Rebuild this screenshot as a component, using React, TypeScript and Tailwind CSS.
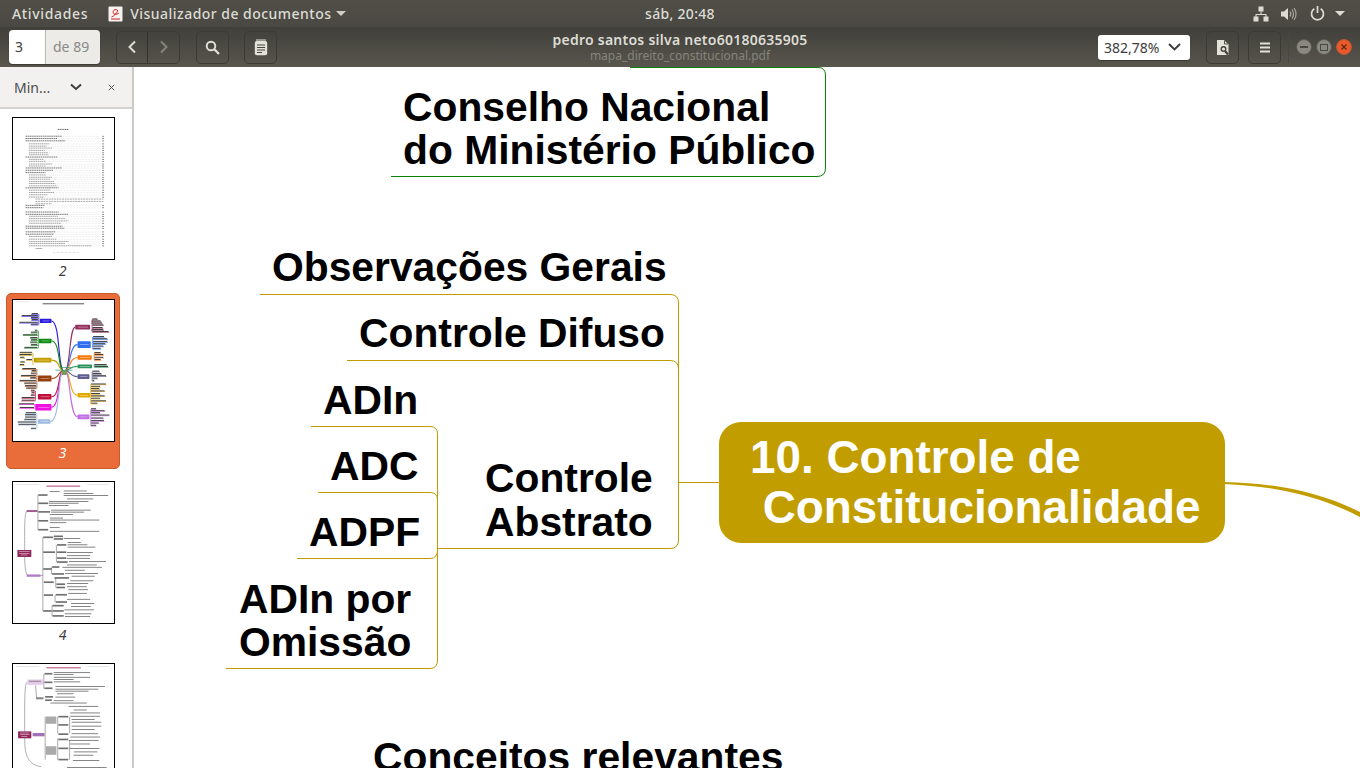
import React from "react";

const Bars = ({ items, color, h = 1.6 }: { items: number[][]; color: string; h?: number }) => (
  <g fill={color}>
    {items.map((b, i) => (
      <rect key={i} x={b[0]} y={b[1]} width={b[2]} height={h} />
    ))}
  </g>
);

function TocThumb() {
  const rows: number[][] = [
    [75, 76, 0], [75, 83, 0], [75, 90, 0], [85, 99, 1], [85, 106, 1], [85, 112, 1], [85, 119, 1], [85, 126, 1], [85, 132, 1],
    [75, 139, 0], [85, 146, 1], [85, 152, 1], [85, 160, 1], [85, 166, 1], [75, 172, 0], [75, 179, 0], [75, 186, 0], [85, 193, 1], [85, 200, 1], [85, 206, 1],
    [85, 213, 1], [85, 219, 1], [85, 226, 1], [75, 232, 0], [85, 239, 1], [85, 246, 1], [85, 253, 1], [85, 260, 1],
    [75, 285, 0], [75, 292, 0], [75, 305, 0], [75, 312, 0], [85, 318, 1], [85, 325, 1], [85, 332, 1], [85, 339, 1], [75, 348, 0], [75, 354, 0], [75, 365, 0], [75, 372, 0], [85, 379, 1], [85, 387, 1], [85, 394, 1], [85, 400, 1], [85, 407, 1],
  ];
  const widths = [110, 95, 120, 62, 54, 70, 48, 58, 60, 96, 44, 52, 72, 50, 110, 84, 60, 52, 70, 64, 76, 80, 86, 100, 66, 78, 56, 46, 58, 54, 100, 130, 88, 110, 120, 96, 112, 118, 90, 86, 70, 84, 120, 110, 190];
  return (
    <svg viewBox="37 22 305 426" className="block w-full h-full">
      <rect x="37" y="22" width="305" height="426" fill="#fff" />
      <line x1="172" y1="56.500" x2="206" y2="56.500" stroke="#666" strokeWidth="3" strokeDasharray="4 1.500" />
      {rows.map((r, i) => (
        <g key={i}>
          <line x1={r[0]} y1={r[1] + 1} x2={r[0] + widths[i]} y2={r[1] + 1} stroke={r[2] ? "#8a8a8a" : "#555"} strokeWidth="2.400" strokeDasharray="5 1.500" />
          <line x1={r[0] + widths[i] + 4} y1={r[1] + 1.500} x2="302" y2={r[1] + 1.500} stroke="#b8b8b8" strokeWidth="1.400" strokeDasharray="1.500 3" />
          <rect x="306" y={r[1]} width="6" height="2.400" fill="#777" />
        </g>
      ))}
      {[267, 274].map((y) => (
        <line key={y} x1="105" y1={y} x2="310" y2={y} stroke="#8a8a8a" strokeWidth="2.200" strokeDasharray="6 2" />
      ))}
      <line x1="105" y1="281" x2="155" y2="281" stroke="#8a8a8a" strokeWidth="2.200" strokeDasharray="6 2" />
      <rect x="105" y="415" width="20" height="2" fill="#888" />
      <line x1="158" y1="428" x2="238" y2="428" stroke="#aaa" strokeWidth="1.500" strokeDasharray="2 2" />
    </svg>
  );
}

function MindThumb() {
  const left = [
    ["#2a1ae0", 118, 100, 35, 13],
    ["#0d8a12", 115, 160, 38, 14],
    ["#c49d00", 100, 218, 53, 14],
    ["#98400c", 112, 272, 41, 18],
    ["#c00d3c", 112, 328, 41, 16],
    ["#f011e0", 104, 358, 49, 20],
    ["#9dbce0", 112, 404, 38, 14],
  ] as const;
  const right = [
    ["#93305f", 225, 118, 45, 14],
    ["#2f6ff0", 232, 168, 40, 20],
    ["#f57a0a", 232, 210, 43, 14],
    ["#2b9460", 232, 238, 44, 12],
    ["#605f93", 232, 268, 36, 14],
    ["#e2aa00", 232, 325, 38, 13],
    ["#c26be8", 232, 390, 36, 14],
  ] as const;
  const leftLeaves: Record<string, number[][]> = {
    "#2a1ae0": [[92, 86, 22], [62, 92, 52], [90, 98, 24], [92, 104, 22], [55, 112, 59], [90, 118, 24]],
    "#0d8a12": [[102, 136, 10], [90, 142, 22], [66, 150, 46], [88, 158, 24], [90, 165, 22], [88, 172, 24], [90, 180, 22], [70, 188, 42]],
    "#c49d00": [[56, 203, 40], [55, 210, 40], [57, 218, 16], [76, 225, 20], [58, 232, 16], [56, 240, 16]],
    "#98400c": [[64, 252, 44], [92, 258, 16], [90, 266, 18], [60, 273, 48], [88, 280, 20], [56, 288, 52], [70, 296, 38], [72, 304, 36], [76, 311, 32]],
    "#c00d3c": [[90, 318, 14], [92, 324, 12], [90, 332, 14], [62, 340, 42], [62, 348, 42]],
    "#f011e0": [[54, 359, 48], [56, 370, 46]],
    "#9dbce0": [[74, 386, 34], [72, 392, 36], [72, 399, 36], [70, 406, 38], [50, 414, 58], [52, 421, 56], [90, 433, 18]],
  };
  const rightLeaves: Record<string, number[][]> = {
    "#93305f": [[276, 102, 18], [274, 108, 30], [274, 114, 34], [276, 120, 36], [276, 128, 34], [274, 134, 38], [276, 140, 52]],
    "#2f6ff0": [[278, 155, 36], [278, 162, 46], [278, 170, 46], [278, 177, 40], [278, 184, 34], [278, 191, 26]],
    "#f57a0a": [[282, 204, 22], [282, 210, 30], [282, 218, 30], [282, 225, 22]],
    "#2b9460": [[282, 240, 40], [282, 246, 44]],
    "#605f93": [[276, 260, 24], [276, 267, 30], [276, 274, 44], [276, 281, 18], [276, 288, 8]],
    "#e2aa00": [[272, 299, 48], [272, 306, 30], [272, 313, 28], [272, 320, 44], [272, 328, 30], [272, 335, 44], [272, 342, 30], [272, 350, 48], [272, 357, 22]],
    "#c26be8": [[272, 374, 18], [272, 380, 44], [272, 386, 30], [272, 393, 58], [272, 402, 40], [272, 410, 42], [272, 417, 26], [272, 424, 18]],
  };
  return (
    <svg viewBox="37 43 305 427" className="block w-full h-full">
      <rect x="37" y="43" width="305" height="427" fill="#fff" />
      <rect x="126" y="53" width="126" height="3" fill="#555" />
      <rect x="45" y="48" width="40" height="1.500" fill="#ccc" />
      {left.map((n) => (
        <path key={n[0]} d={`M${n[1] + n[3]} ${n[2] + n[4] / 2} C180 ${n[2] + n[4] / 2} 172 255 190 258`} fill="none" stroke={n[0]} strokeWidth="3.400" />
      ))}
      {right.map((n) => (
        <path key={n[0]} d={`M${n[1]} ${n[2] + n[4] / 2} C207 ${n[2] + n[4] / 2} 210 255 194 258`} fill="none" stroke={n[0]} strokeWidth="3.400" />
      ))}
      {[...left, ...right].map((n) => (
        <rect key={n[0]} x={n[1]} y={n[2]} width={n[3]} height={n[4]} rx="2" fill={n[0]} />
      ))}
      {[...left, ...right].map((n) => (
        <rect key={n[0] + "t"} x={n[1] + 8} y={n[2] + n[4] / 2 - 1} width={n[3] - 14} height="2" fill="#fff" opacity="0.55" />
      ))}
      {Object.entries(leftLeaves).map(([c, it]) => (
        <g key={c}>
          <Bars items={it} color={c} h={1.800} />
          <Bars items={it.map((b) => [b[0] + 1, b[1] - 3, b[2] - 3])} color="#222" h={2.600} />
          <rect x={it[0][0] + it[0][2]} y={it[0][1]} width="2" height={it[it.length - 1][1] - it[0][1]} fill={c} />
        </g>
      ))}
      {Object.entries(rightLeaves).map(([c, it]) => (
        <g key={c}>
          <Bars items={it} color={c} h={1.800} />
          <Bars items={it.map((b) => [b[0] + 1, b[1] - 3, b[2] - 3])} color="#222" h={2.600} />
          <rect x={it[0][0] - 1} y={it[0][1]} width="2" height={it[it.length - 1][1] - it[0][1]} fill={c} />
        </g>
      ))}
      <rect x="180" y="246" width="35" height="3" fill="#2b9460" opacity=".7" />
      <rect x="165" y="254" width="52" height="3" fill="#2b9460" opacity=".7" />
      <rect x="185" y="256" width="14" height="14" fill="#6f9a5a" />
    </svg>
  );
}

function Tree4() {
  const grey = "#6f6f6f";
  const boxes = [
    [113, 55, 28, 6], [113, 80, 30, 6], [113, 106, 36, 6], [113, 133, 30, 6], [113, 160, 30, 6],
    [128, 183, 30, 6], [160, 180, 28, 6], [160, 188, 28, 6], [128, 228, 36, 6], [170, 206, 28, 6], [170, 228, 28, 6], [170, 246, 28, 6], [170, 258, 32, 6],
    [128, 279, 26, 6], [155, 273, 22, 6], [155, 294, 36, 6], [130, 319, 30, 6], [162, 306, 44, 6], [168, 325, 26, 6], [168, 335, 26, 6], [130, 358, 28, 10], [166, 357, 34, 6], [166, 379, 34, 6], [128, 406, 26, 6], [156, 390, 34, 6], [156, 406, 34, 6], [156, 421, 34, 6],
  ];
  const leaves = [
    [148, 46, 30], [190, 44, 70], [190, 52, 90], [190, 58, 135], [200, 68, 80], [145, 76, 120], [145, 81, 90], [145, 88, 60], [152, 102, 120], [152, 108, 100], [148, 115, 70], [148, 126, 40], [148, 132, 150], [148, 140, 50], [148, 155, 30], [148, 166, 150],
    [190, 188, 50], [202, 200, 40], [202, 207, 60], [202, 214, 84], [200, 230, 78], [200, 240, 70], [200, 248, 70], [206, 258, 112], [200, 268, 90], [186, 275, 120], [194, 284, 60], [194, 294, 100], [214, 302, 70], [210, 316, 70], [200, 324, 64], [200, 334, 60], [204, 343, 60], [204, 354, 56], [200, 372, 70], [212, 385, 70], [212, 394, 60], [192, 404, 90], [194, 416, 80], [194, 424, 76],
  ];
  return (
    <svg viewBox="37 18 305 427" className="block w-full h-full">
      <rect x="37" y="18" width="305" height="427" fill="#fff" />
      <rect x="138" y="29" width="102" height="3" fill="#b0407a" />
      <rect x="46" y="24" width="70" height="1.500" fill="#ccc" />
      <rect x="262" y="24" width="66" height="1.500" fill="#ccc" />
      <path d="M72 224 C72 170 70 106 80 106 M72 245 C72 280 76 301 82 301" fill="none" stroke="#999" strokeWidth="2.400" />
      <path d="M112 58 V163 M112 106 H80 M127 186 V409 M127 301 H120 M168 209 V261 M153 276 V297 M166 309 V338 M164 360 V382 M155 393 V424" fill="none" stroke={grey} strokeWidth="1.800" />
      <rect x="50" y="224" width="42" height="21" fill="#8e2659" />
      <rect x="55" y="228" width="32" height="2" fill="#e0b8cc" />
      <rect x="55" y="233" width="32" height="2" fill="#e0b8cc" />
      <rect x="60" y="238" width="20" height="2" fill="#e0b8cc" />
      <rect x="78" y="103" width="32" height="6" fill="#a25a8d" />
      <rect x="78" y="298" width="42" height="7" fill="#b478c8" />
      <Bars items={boxes} color={grey} h={5} />
      <Bars items={leaves} color="#666" h={2.400} />
    </svg>
  );
}

function Tree5() {
  const grey = "#6f6f6f";
  const boxes = [
    [132, 592, 24, 6], [132, 618, 24, 6], [132, 636, 24, 6], [134, 662, 24, 6], [134, 672, 20, 6], [174, 722, 30, 6], [174, 747, 30, 6], [174, 775, 30, 6], [174, 791, 30, 6], [174, 818, 30, 6], [174, 852, 30, 6],
  ];
  const leaves = [
    [160, 590, 110], [160, 596, 60], [160, 604, 110], [160, 611, 60], [160, 618, 80], [165, 632, 150], [165, 640, 130], [165, 646, 100], [170, 654, 50], [165, 664, 60], [160, 675, 60], [150, 682, 110],
    [205, 692, 90], [220, 703, 40], [210, 712, 90], [210, 722, 90], [214, 732, 70], [214, 740, 90], [214, 752, 90], [214, 762, 70], [214, 775, 80], [210, 785, 90], [206, 795, 90], [210, 806, 60], [208, 820, 90], [222, 830, 70], [220, 840, 60], [218, 856, 80], [200, 877, 120],
  ];
  return (
    <svg viewBox="37 565 305 427" className="block w-full h-full">
      <rect x="37" y="565" width="305" height="427" fill="#fff" />
      <rect x="138" y="575" width="104" height="3" fill="#b0407a" />
      <rect x="46" y="571" width="70" height="1.500" fill="#ccc" />
      <rect x="262" y="571" width="66" height="1.500" fill="#ccc" />
      <path d="M72 769 C72 700 70 620 80 620 M72 790 C72 830 76 870 122 876" fill="none" stroke="#999" strokeWidth="2.400" />
      <path d="M130 595 V640 M130 620 H128 M105 630 L108 668 H132 M134 725 V855 M172 725 V775 M172 790 V855 M208 725 V775 M208 795 V855" fill="none" stroke={grey} strokeWidth="1.800" />
      <rect x="52" y="769" width="40" height="21" fill="#8e2659" />
      <rect x="58" y="773" width="28" height="2" fill="#e0b8cc" />
      <rect x="58" y="778" width="28" height="2" fill="#e0b8cc" />
      <rect x="62" y="783" width="18" height="2" fill="#e0b8cc" />
      <rect x="80" y="612" width="47" height="16" fill="#e5c8ee" />
      <rect x="85" y="616" width="36" height="2" fill="#664" />
      <rect x="96" y="774" width="36" height="10" fill="#a070b8" />
      <rect x="106" y="666" width="22" height="6" fill="#888" />
      <rect x="136" y="724" width="32" height="22" fill="#aaa" />
      <rect x="136" y="814" width="32" height="26" fill="#aaa" />
      <Bars items={boxes} color={grey} h={5} />
      <Bars items={leaves} color="#666" h={2.400} />
    </svg>
  );
}

function Thumb({ n, active, children }: { n: string; active?: boolean; children: React.ReactNode }) {
  return (
    <div className={active ? "mx-[6px] w-[114px] h-[176px] shrink-0 rounded-[5px] bg-[#e96d3a] border border-[#c95a2c] pt-[5px] pl-[5px]" : "mx-[6px] w-[114px] h-[176px] shrink-0 border border-transparent pt-[5px] pl-[5px]"}>
      <div className="w-[103px] h-[143px] border border-black bg-white overflow-hidden">{children}</div>
      <div className={active ? "text-center italic text-[14px] leading-[20px] mt-px pr-[6px] text-white" : "text-center italic text-[14px] leading-[20px] mt-px pr-[6px] text-[#3c3c3c]"}>{n}</div>
    </div>
  );
}

const ToolBtn = ({ children }: { children: React.ReactNode }) => (
  <div className="w-[33px] h-[33px] rounded-[5px] border border-[#3b3a35] flex items-center justify-center">{children}</div>
);

const Label = ({ x, y, children }: { x: number; y: number; children: React.ReactNode }) => (
  <div className="absolute whitespace-pre font-bold leading-[43.5px] text-[40.8px] text-black" style={{ left: x, top: y }}>
    {children}
  </div>
);

export default function App() {
  const gold = "#bf9a00";
  return (
    <div className="w-[1360px] h-[768px] overflow-hidden flex flex-col bg-white font-['Noto_Sans','Open_Sans',sans-serif]">
      {/* Shell top bar */}
      <div className="h-[27px] shrink-0 grid grid-cols-[1fr_auto_1fr] items-center bg-gradient-to-b from-[#514f48] to-[#4a4842] text-[#dcdcd4] text-[14px] font-medium">
        <div className="flex items-center pl-[12px]">
          <span className="tracking-[0.65px]">Atividades</span>
          <svg width="15" height="16" viewBox="0 0 15 16" className="ml-[20px]">
            <rect x="0.5" y="0.5" width="14" height="15" rx="1" fill="#f4f3f1" />
            <path d="M3.500 11c2.500-1 5.500-4 6-6 .3-1.600-2-2.200-3.500-.8C4.500 5.500 5 8 7 8.300c1.500.2 3-.5 4-1.300M3 13h9" fill="none" stroke="#d6201f" strokeWidth="1" />
          </svg>
          <span className="ml-[7px] tracking-[0.47px]">Visualizador de documentos</span>
          <svg width="10" height="5" viewBox="0 0 10 5" className="ml-[5px]"><path d="M0 0h10L5 5z" fill="#cfcfc8" /></svg>
        </div>
        <div className="tracking-[0.3px]">sáb, 20:48</div>
        <div className="flex items-center justify-end pr-[15px]">
          <svg width="16" height="16" viewBox="0 0 16 16" fill="#dcdcd4">
            <rect x="5.500" y="0.500" width="5" height="5" />
            <rect x="0.500" y="10.500" width="5" height="5" />
            <rect x="10.500" y="10.500" width="5" height="5" />
            <path d="M7.500 5.500h1V8H13.500v3h-1V9h-9v2h-1V8h5z" />
          </svg>
          <svg width="16" height="16" viewBox="0 0 16 16" className="ml-[12px]">
            <path d="M0 5.500h3L7 2v12L3 10.500H0z" fill="#dcdcd4" />
            <path d="M9 5.500c1 1.500 1 3.500 0 5M11 3.500c2 2.500 2 6.500 0 9M13 2c2.700 3.500 2.700 8.500 0 12" fill="none" stroke="#a9a8a0" strokeWidth="1.200" />
          </svg>
          <svg width="15" height="15" viewBox="0 0 15 15" className="ml-[13px]">
            <path d="M4.300 2.800a6 6 0 1 0 6.400 0" fill="none" stroke="#dcdcd4" strokeWidth="1.700" />
            <path d="M7.500 0v7" stroke="#dcdcd4" strokeWidth="1.700" />
          </svg>
          <svg width="10" height="5" viewBox="0 0 10 5" className="ml-[10px]"><path d="M0 0h10L5 5z" fill="#dcdcd4" /></svg>
        </div>
      </div>

      {/* Title / tool bar */}
      <div className="h-[40px] shrink-0 grid grid-cols-[1fr_auto_1fr] items-center bg-gradient-to-b from-[#403f3a] to-[#58564d]">
        <div className="flex items-center pl-[9px]">
          <div className="flex h-[34px] w-[91px] rounded-[4px] overflow-hidden text-[14px] shadow-[0_1px_1px_#00000055]">
            <div className="w-[37px] bg-white border-r border-[#b8b6b0] text-[#3c3c3c] pl-[6px] leading-[33px]">3</div>
            <div className="flex-1 bg-[#ecebe8] text-[#8a8a86] pl-[7px] leading-[33px]">de 89</div>
          </div>
          <div className="ml-[16px] flex w-[64px] h-[33px] rounded-[5px] border border-[#3b3a35]">
            <div className="w-[31px] border-r border-[#33322e] flex items-center justify-center">
              <svg width="10" height="14" viewBox="0 0 10 14"><path d="M8 1.500L2.500 7 8 12.500" fill="none" stroke="#dcdcd4" strokeWidth="2" /></svg>
            </div>
            <div className="flex-1 flex items-center justify-center">
              <svg width="10" height="14" viewBox="0 0 10 14"><path d="M2 1.500L7.500 7 2 12.500" fill="none" stroke="#85847c" strokeWidth="2" /></svg>
            </div>
          </div>
          <div className="ml-[16px]">
            <ToolBtn>
              <svg width="15" height="15" viewBox="0 0 15 15"><circle cx="6" cy="6" r="4.300" fill="none" stroke="#e2e1da" strokeWidth="1.900" /><path d="M9.300 9.300L14 14" stroke="#e2e1da" strokeWidth="2.200" /></svg>
            </ToolBtn>
          </div>
          <div className="ml-[15px]">
            <ToolBtn>
              <svg width="14" height="17" viewBox="0 0 14 17">
                <rect x="0.800" y="2" width="12.400" height="14.300" rx="2" fill="#e2e1da" />
                <path d="M3 0v3M5 0v3M7 0v3M9 0v3M11 0v3" stroke="#e2e1da" strokeWidth="1" />
                <path d="M3 6h8M3 8.500h8M3 11h8M3 13.500h5" stroke="#45433d" strokeWidth="1.100" />
              </svg>
            </ToolBtn>
          </div>
        </div>
        <div className="text-center">
          <div className="text-[14px] leading-[16px] font-semibold text-[#dddcd5] tracking-[0.25px]">pedro santos silva neto60180635905</div>
          <div className="text-[12px] leading-[14px] mt-px text-[#85847b]">mapa_direito_constitucional.pdf</div>
        </div>
        <div className="flex items-center justify-end pr-[8px]">
          <div className="w-[92px] h-[25px] bg-white rounded-[3px] flex items-center justify-between pl-[6px] pr-[9px] text-[14px] text-[#3c3c3c] shadow-[0_1px_1px_#00000055]">
            <span>382,78%</span>
            <svg width="13" height="8" viewBox="0 0 13 8"><path d="M1 1l5.500 5.500L12 1" fill="none" stroke="#3c3c3c" strokeWidth="1.900" /></svg>
          </div>
          <div className="ml-[16px]">
            <ToolBtn>
              <svg width="14" height="17" viewBox="0 0 14 17">
                <path d="M1 1h7l4.500 4.500V16H1z" fill="#e2e1da" />
                <path d="M8.500 1.500v3.500H12" fill="none" stroke="#57554d" strokeWidth="1" />
                <circle cx="7.500" cy="10" r="2.300" fill="none" stroke="#45433d" strokeWidth="1.400" />
                <path d="M9 12l3 3.500" stroke="#45433d" strokeWidth="2.200" />
              </svg>
            </ToolBtn>
          </div>
          <div className="ml-[9px]">
            <ToolBtn>
              <svg width="12" height="11" viewBox="0 0 12 11"><path d="M1 1.500h10M1 5.500h10M1 9.500h10" stroke="#e2e1da" strokeWidth="2" /></svg>
            </ToolBtn>
          </div>
          <div className="ml-[7px] w-px h-[32px] bg-[#47463f]" />
          <div className="ml-[7px] flex items-center gap-[4px]">
            <div className="w-[16px] h-[16px] rounded-full bg-[#8a8981] border border-[#5a5850] flex items-center justify-center"><div className="w-[8px] h-[2px] bg-[#4a4842]" /></div>
            <div className="w-[16px] h-[16px] rounded-full bg-[#8a8981] border border-[#5a5850] flex items-center justify-center"><div className="w-[8px] h-[7px] border border-[#4a4842]" /></div>
            <div className="w-[16px] h-[16px] rounded-full bg-[#e8592b] border border-[#b9532c] flex items-center justify-center">
              <svg width="8" height="8" viewBox="0 0 8 8"><path d="M1.500 1.500l5 5M6.500 1.500l-5 5" stroke="#5c2a14" strokeWidth="1.200" /></svg>
            </div>
          </div>
        </div>
      </div>

      <div className="flex-1 min-h-0 flex">
        {/* Sidebar */}
        <div className="w-[134px] shrink-0 border-r-2 border-[#cbcac8] flex flex-col bg-white overflow-hidden">
          <div className="h-[42px] shrink-0 bg-[#f2f1f0] border-b-2 border-[#d3d1ce] flex items-center pl-[14px] text-[14px] text-[#4c4c4c]">
            <span>Min...</span>
            <svg width="12" height="8" viewBox="0 0 12 8" className="ml-[20px]"><path d="M1 1.500l5 4.500 5-4.500" fill="none" stroke="#3c3c3c" strokeWidth="1.900" /></svg>
            <svg width="7" height="7" viewBox="0 0 7 7" className="ml-[26px]"><path d="M.8.800l5.400 5.400M6.200.800L.8 6.200" stroke="#555" strokeWidth="1" /></svg>
          </div>
          <div className="flex-1 min-h-0 flex flex-col gap-[6px] pt-[2px]">
            <Thumb n="2"><TocThumb /></Thumb>
            <Thumb n="3" active><MindThumb /></Thumb>
            <Thumb n="4"><Tree4 /></Thumb>
            <Thumb n=""><Tree5 /></Thumb>
          </div>
        </div>

        {/* Document page: a mind-map canvas */}
        <div className="relative flex-1 bg-white overflow-hidden font-['Liberation_Sans',Arial,sans-serif]">
          <svg width="1226" height="701" viewBox="134 67 1226 701" className="absolute left-0 top-0" fill="none" strokeWidth="1">
            <path d="M630 67.500H818Q825.500 67.500 825.500 75V168Q825.500 176.500 817 176.500H391" stroke="#0a820a" />
            <path d="M260 294.500H670Q678.500 294.500 678.500 303V540Q678.500 548.500 670 548.500H437" stroke={gold} />
            <path d="M347 360.500H670Q678.500 360.500 678.500 369" stroke={gold} />
            <path d="M678 482.500H720" stroke={gold} />
            <path d="M311 426.500H430Q437.500 426.500 437.500 434V660Q437.500 668.500 430 668.500H226" stroke={gold} />
            <path d="M318 492.500H430Q437.500 492.500 437.500 500" stroke={gold} />
            <path d="M297 558.500H430Q437.500 558.500 437.500 550" stroke={gold} />
            <path d="M1224 482C1275 483 1320 492 1360 512V517C1320 496 1275 486 1224 484Z" fill="#c29d00" />
          </svg>

          <Label x={269} y={18.5}>{"Conselho Nacional\ndo Ministério Público"}</Label>
          <Label x={138} y={179}>Observações Gerais</Label>
          <Label x={225} y={245}>Controle Difuso</Label>
          <Label x={189} y={312}>ADIn</Label>
          <Label x={196} y={378}>ADC</Label>
          <Label x={175} y={444}>ADPF</Label>
          <Label x={105} y={510.5}>{"ADIn por\nOmissão"}</Label>
          <Label x={351} y={390}>{"Controle\nAbstrato"}</Label>
          <Label x={239} y={669}>Conceitos relevantes</Label>

          <div className="absolute left-[585px] top-[355px] w-[506px] h-[121px] rounded-[22px] bg-[#c29d00]">
            <div className="absolute left-[31px] top-[11px] whitespace-pre text-white font-bold text-[45.8px] leading-[50px]">{"10. Controle de\n Constitucionalidade"}</div>
          </div>
        </div>
      </div>
    </div>
  );
}
